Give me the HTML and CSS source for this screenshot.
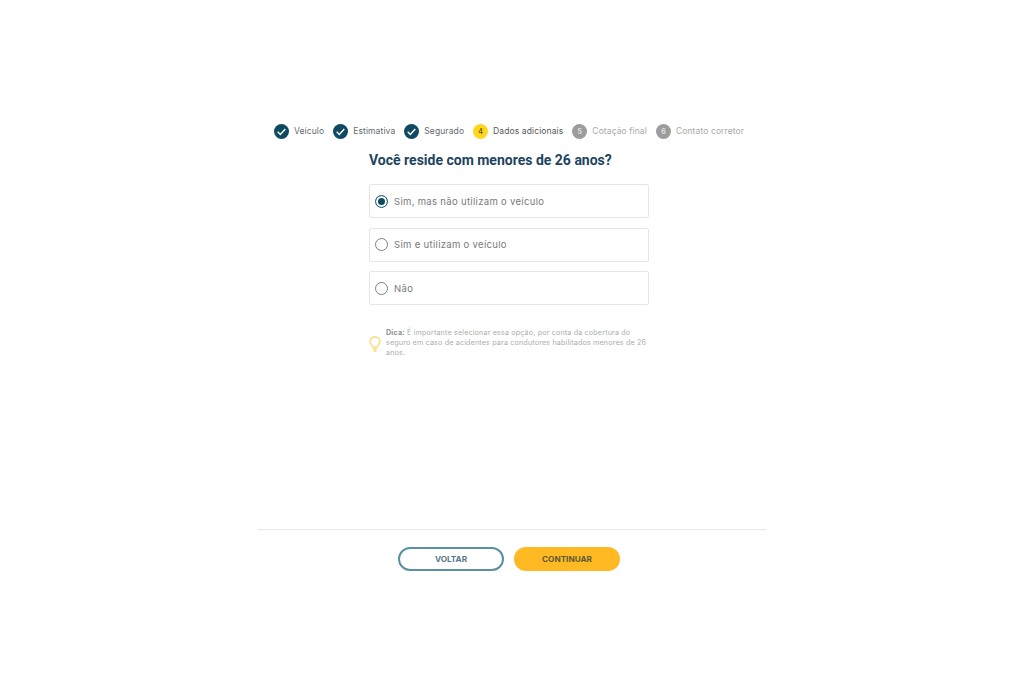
FILE: index.html
```html
<!DOCTYPE html>
<html lang="pt-BR">
<head>
    <meta charset="UTF-8">
    <title>Cotação</title>
    <link rel="stylesheet" href="styles.css">
</head>
<body>
    <div class="container">
        <!-- Stepper -->
        <div class="steps">
            <div class="step done">
                <span class="dot"><svg width="15" height="15" viewBox="0 0 15 15"><path d="M3.7 7.8l2.6 2.6 5-5.4" fill="none" stroke="#fff" stroke-width="1.4"/></svg></span>
                <span class="step-name">Veículo</span>
            </div>
            <div class="step done">
                <span class="dot"><svg width="15" height="15" viewBox="0 0 15 15"><path d="M3.7 7.8l2.6 2.6 5-5.4" fill="none" stroke="#fff" stroke-width="1.4"/></svg></span>
                <span class="step-name">Estimativa</span>
            </div>
            <div class="step done">
                <span class="dot"><svg width="15" height="15" viewBox="0 0 15 15"><path d="M3.7 7.8l2.6 2.6 5-5.4" fill="none" stroke="#fff" stroke-width="1.4"/></svg></span>
                <span class="step-name">Segurado</span>
            </div>
            <div class="step current">
                <span class="dot">4</span>
                <span class="step-name">Dados adicionais</span>
            </div>
            <div class="step todo">
                <span class="dot">5</span>
                <span class="step-name">Cotação final</span>
            </div>
            <div class="step todo">
                <span class="dot">6</span>
                <span class="step-name">Contato corretor</span>
            </div>
        </div>

        <!-- Question -->
        <div class="question">
            <h1>Você reside com menores de 26 anos?</h1>
            <div class="options">
                <label class="option">
                    <span class="radio checked"></span>
                    <span>Sim, mas não utilizam o veículo</span>
                </label>
                <label class="option">
                    <span class="radio"></span>
                    <span>Sim e utilizam o veículo</span>
                </label>
                <label class="option">
                    <span class="radio"></span>
                    <span>Não</span>
                </label>
            </div>
            <div class="tip">
                <svg class="tip-icon" width="12" height="16" viewBox="0 0 12 16">
                    <path d="M3.8 11.2C3.6 9.6 1 8.4 1 5.6 1 3 3.2 1 6 1s5 2 5 4.6c0 2.8-2.6 4-2.8 5.6z" fill="none" stroke="#f7dc6f" stroke-width="1.3"/>
                    <path d="M4 13h4M4.6 15h2.8" fill="none" stroke="#f7dc6f" stroke-width="1.3"/>
                </svg>
                <p><strong>Dica:</strong> É importante selecionar essa opção, por conta da cobertura do seguro em caso de acidentes para condutores habilitados menores de 26 anos.</p>
            </div>
        </div>

        <!-- Footer buttons -->
        <div class="actions">
            <button class="btn btn-back">VOLTAR</button>
            <button class="btn btn-next">CONTINUAR</button>
        </div>
    </div>
</body>
</html>
```

FILE: styles.css
```css
body {
    margin: 0;
    background: #fff;
    font-family: 'Inter', sans-serif;
    color: #666;
}

.container {
    width: 508px;
    margin: 0 auto;
    padding-top: 123px;
}

.steps {
    display: flex;
    justify-content: center;
    gap: 9px;
    height: 16px;
    padding-right: 6px;
}

.step {
    display: flex;
    align-items: center;
    gap: 5px;
    font-size: 8.5px;
    letter-spacing: 0.11px;
    white-space: nowrap;
}

.dot {
    display: flex;
    align-items: center;
    justify-content: center;
    width: 15px;
    height: 15px;
    border-radius: 50%;
    font-size: 7px;
    font-weight: 600;
}

.done .dot {
    background: #0f4a60;
}

.done .step-name {
    color: #5f6b72;
}

.current .dot {
    background: #ffd61f;
    color: #6b5a10;
}

.current .step-name {
    color: #55585c;
}

.todo .dot {
    background: #9c9c9c;
    color: #e4e4e4;
}

.todo .step-name {
    color: #a8a8a8;
}

.question {
    width: 280px;
    margin-left: 111px;
}

h1 {
    margin: 12px 0 15px;
    font-family: 'Roboto', sans-serif;
    font-size: 14px;
    line-height: 18px;
    font-weight: 700;
    color: #1d4460;
}

.options {
    display: flex;
    flex-direction: column;
    gap: 9.5px;
}

.option {
    display: flex;
    align-items: center;
    gap: 6px;
    height: 32px;
    padding-left: 5px;
    border: 1px solid #e6e6e6;
    border-radius: 2px;
    font-size: 9.5px;
    letter-spacing: 0.32px;
    color: #77797c;
}

.radio {
    box-sizing: border-box;
    width: 13px;
    height: 13px;
    border: 1.7px solid #808080;
    border-radius: 50%;
}

.radio.checked {
    border-color: #2b6a86;
    background: #0f4a60;
    box-shadow: inset 0 0 0 2px #fff;
}

.tip {
    display: flex;
    align-items: center;
    gap: 5px;
    margin-top: 23px;
}

.tip-icon {
    flex-shrink: 0;
    margin-top: 2px;
}

.tip p {
    margin: 0;
    font-size: 7.2px;
    line-height: 10px;
    letter-spacing: 0.15px;
    color: #adadad;
}

.tip strong {
    color: #8f8f8f;
}

.actions {
    display: flex;
    justify-content: center;
    gap: 10px;
    margin-top: 171px;
    padding-top: 17px;
    padding-right: 6px;
    border-top: 1px solid #e8e8e8;
}

.btn {
    width: 106px;
    height: 24px;
    border-radius: 12px;
    font-family: 'Inter', sans-serif;
    font-size: 8.2px;
    font-weight: 700;
    cursor: pointer;
}

.btn-back {
    background: #fff;
    border: 2px solid #5b8fa3;
    color: #55788e;
}

.btn-next {
    background: #ffb922;
    border: none;
    color: #5c5a3a;
}
```
